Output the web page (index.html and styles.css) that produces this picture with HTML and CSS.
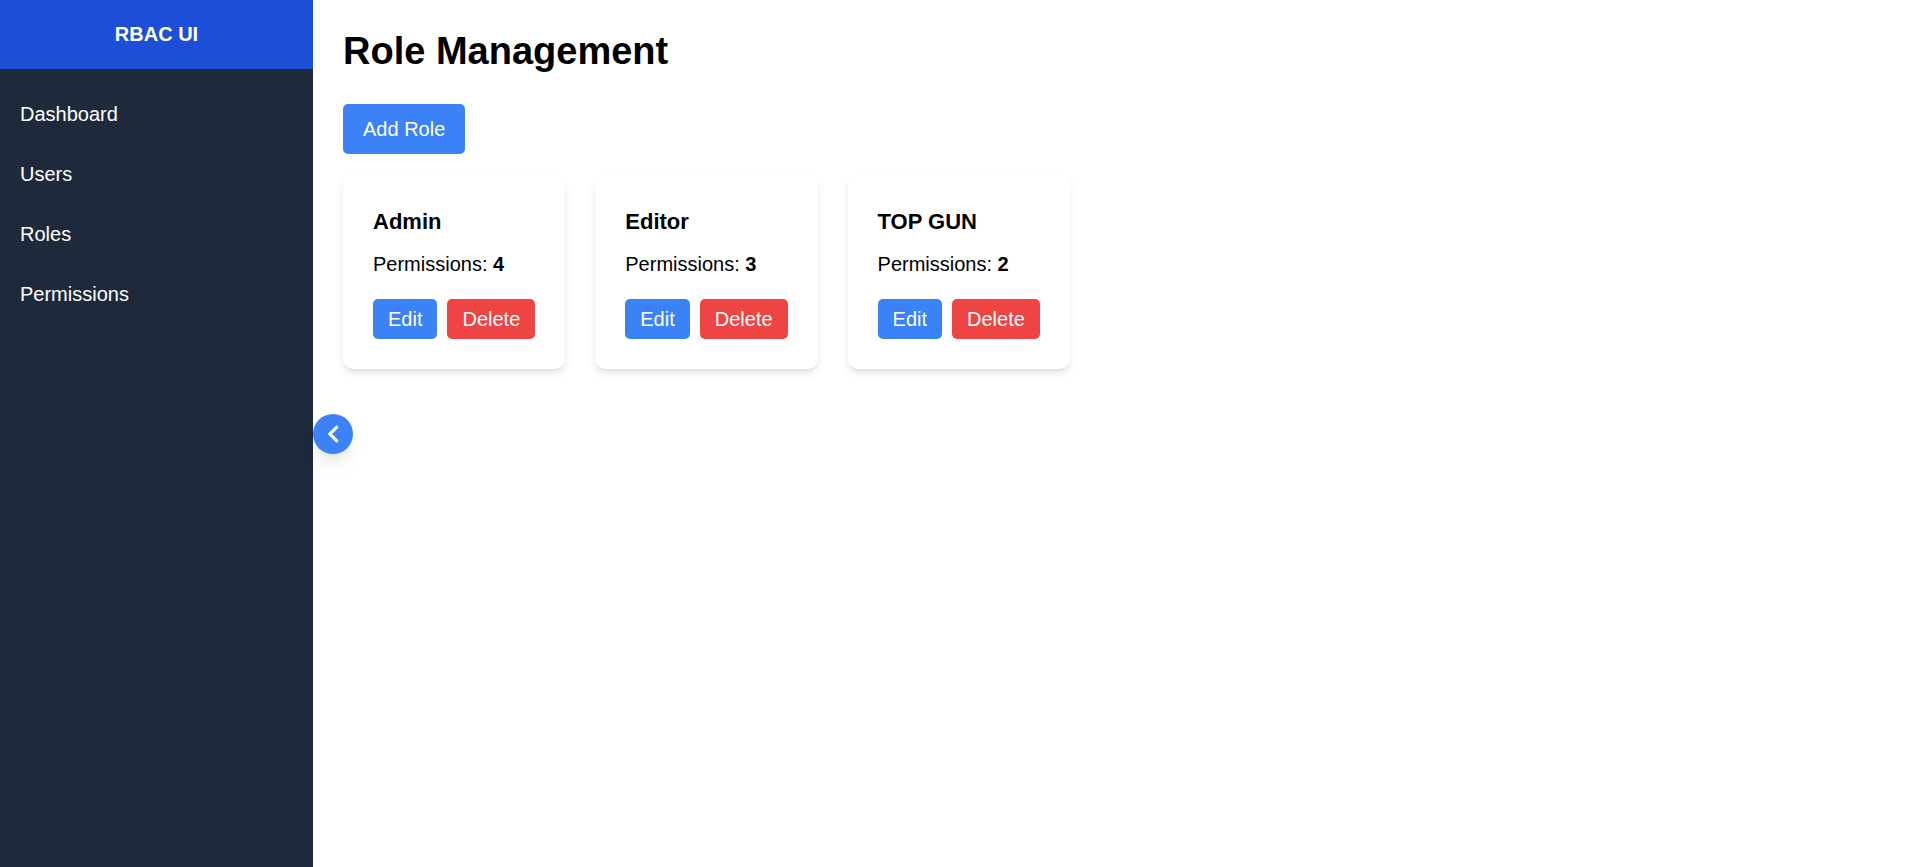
FILE: index.html
```html
<!DOCTYPE html>
<html lang="en">
<head>
<meta charset="utf-8">
<meta name="viewport" content="width=device-width, initial-scale=1">
<title>RBAC UI</title>
<link rel="stylesheet" href="styles.css">
</head>
<body class="app">
<aside class="sidebar">
  <div class="brand">RBAC UI</div>
  <nav class="nav">
    <a class="nav-link" href="#dashboard">Dashboard</a>
    <a class="nav-link" href="#users">Users</a>
    <a class="nav-link" href="#roles">Roles</a>
    <a class="nav-link" href="#permissions">Permissions</a>
  </nav>
  <button class="toggle" type="button" aria-label="Collapse sidebar">
    <svg class="toggle-icon" viewBox="0 0 320 512" fill="currentColor" aria-hidden="true"><path d="M34.520 239.030L228.870 44.690c9.370-9.370 24.570-9.370 33.940 0l22.670 22.670c9.360 9.360 9.370 24.520.04 33.900L131.490 256l154.020 154.750c9.340 9.380 9.320 24.540-.04 33.900l-22.670 22.670c-9.370 9.370-24.570 9.370-33.940 0L34.520 272.970c-9.370-9.370-9.370-24.570 0-33.940z"/></svg>
  </button>
</aside>
<main class="main">
  <h1 class="title">Role Management</h1>
  <button class="btn btn-add" type="button">Add Role</button>
  <div class="cards">
    <article class="card">
      <h2 class="card-title">Admin</h2>
      <p class="card-text">Permissions: <strong>4</strong></p>
      <div class="actions"><button class="btn" type="button">Edit</button><button class="btn btn-delete" type="button">Delete</button></div>
    </article>
    <article class="card">
      <h2 class="card-title">Editor</h2>
      <p class="card-text">Permissions: <strong>3</strong></p>
      <div class="actions"><button class="btn" type="button">Edit</button><button class="btn btn-delete" type="button">Delete</button></div>
    </article>
    <article class="card">
      <h2 class="card-title">TOP GUN</h2>
      <p class="card-text">Permissions: <strong>2</strong></p>
      <div class="actions"><button class="btn" type="button">Edit</button><button class="btn btn-delete" type="button">Delete</button></div>
    </article>
  </div>
</main>
</body>
</html>
```
FILE: styles.css
```css
* {
  box-sizing: border-box;
}

.app {
  display: flex;
  min-height: 100vh;
  margin: 0;
  background: #fff;
  color: #000;
  font-family: "Liberation Sans", Arial, sans-serif;
  font-size: 20px;
  line-height: 30px;
}

.sidebar {
  position: relative;
  flex: 0 0 313px;
  background: #1e293b;
  color: #fff;
}

.brand {
  padding: 19px 20px 20px;
  background: #1d4ed8;
  font-weight: 700;
  text-align: center;
}

.nav {
  display: flex;
  flex-direction: column;
  padding-top: 15px;
}

.nav-link {
  padding: 15px 20px;
  color: inherit;
  text-decoration: none;
}

.toggle {
  position: absolute;
  top: 50%;
  left: 100%;
  display: flex;
  align-items: center;
  justify-content: center;
  width: 40px;
  height: 40px;
  margin-top: -20px;
  padding: 0;
  border: 0;
  border-radius: 50%;
  background: #3b82f6;
  color: #fff;
  box-shadow: 0 12px 19px -4px rgba(0, 0, 0, 0.1), 0 5px 8px -5px rgba(0, 0, 0, 0.1);
  cursor: pointer;
}

.toggle-icon {
  height: 20px;
}

.main {
  flex: 1;
  padding: 29px 30px 30px;
}

.title {
  margin: 0 0 30px;
  font-size: 38px;
  line-height: 45px;
}

.btn {
  padding: 5px 15px;
  border: 0;
  border-radius: 5px;
  background: #3b82f6;
  color: #fff;
  font: inherit;
  cursor: pointer;
}

.btn-add {
  display: block;
  margin-bottom: 20px;
  padding: 10px 20px;
}

.btn-delete {
  background: #ef4444;
}

.cards {
  display: flex;
  flex-wrap: wrap;
  gap: 30px;
}

.card {
  padding: 30px;
  border-radius: 10px;
  background: #fff;
  box-shadow: 0 5px 8px -1px rgba(0, 0, 0, 0.1), 0 3px 5px -3px rgba(0, 0, 0, 0.1);
}

.card-title {
  margin: 0 0 10px;
  font-size: 22px;
  line-height: 35px;
}

.card-text {
  margin: 0 0 20px;
}

.actions {
  display: flex;
  gap: 10px;
}
```
